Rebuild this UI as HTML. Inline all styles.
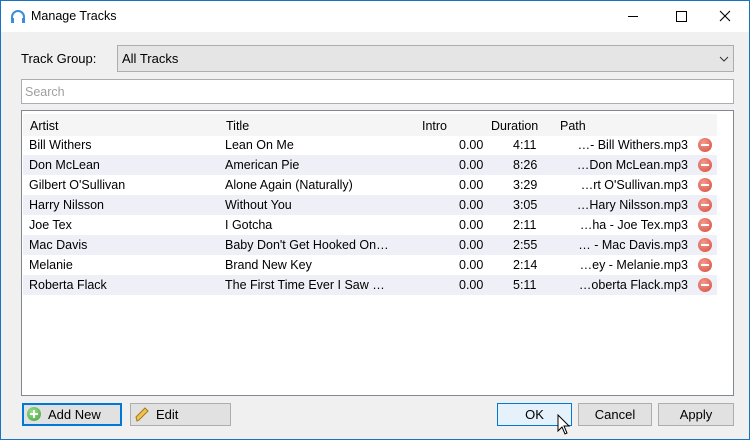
<!DOCTYPE html>
<html><head><style>
body{margin:0;width:750px;height:440px;overflow:hidden;font-family:"Liberation Sans",sans-serif;font-size:12.5px;color:#000}
.win{position:absolute;left:0;top:0;width:748px;height:438px;border:1px solid #1a73c0;background:#f0f0f0}
.tb{position:absolute;left:0;top:0;width:748px;height:31px;background:#fff}
.a{position:absolute;white-space:nowrap}
.box{position:absolute;box-sizing:border-box}
.btn{position:absolute;box-sizing:border-box;background:#e1e1e1;border:1px solid #adadad;height:23px;top:402px;text-align:center;line-height:21px;font-size:13px}
.row{position:absolute;left:1px;width:694px;height:20px}
.row span{position:absolute;top:3px;white-space:nowrap}
.del{position:absolute;left:675px;top:3px;width:14px;height:14px;border-radius:50%;background:radial-gradient(circle at 40% 35%,#f39a8e,#d84b3c);}
.del:after{content:"";position:absolute;left:3px;top:6px;width:8px;height:2px;background:#fff}
</style></head><body>
<div class="win">
<div class="tb">
<svg class="a" style="left:9px;top:8px" width="16" height="16" viewBox="0 0 16 16"><path d="M2 11 V8 A6 6 0 0 1 14 8 V11" fill="none" stroke="#3a8fd8" stroke-width="2"/><rect x="1" y="9" width="3" height="5" fill="#3a8fd8"/><rect x="12" y="9" width="3" height="5" fill="#3a8fd8"/></svg>
<div class="a" style="left:30px;top:8px;font-size:12.5px">Manage Tracks</div>
<div class="a" style="left:627px;top:15px;width:10px;height:1px;background:#000"></div>
<div class="a" style="left:675px;top:10px;width:9px;height:9px;border:1px solid #000"></div>
<svg class="a" style="left:718px;top:9px" width="12" height="12"><path d="M1 1 L11 11 M11 1 L1 11" stroke="#000" stroke-width="1.1"/></svg>
</div>
<div class="a" style="left:20px;top:50px;font-size:13px">Track Group:</div>
<div class="box" style="left:116px;top:44px;width:617px;height:27px;background:#e5e5e5;border:1px solid #adadad"><span class="a" style="left:4px;top:5px;font-size:13px">All Tracks</span><svg class="a" style="left:601px;top:9px" width="10" height="8"><path d="M1 2 L5 6 L9 2" fill="none" stroke="#333"/></svg></div>
<div class="box" style="left:20px;top:78px;width:713px;height:25px;background:#fff;border:1px solid #abadb3"><span class="a" style="left:3px;top:5px;color:#a0a0a0;font-size:12.5px">Search</span></div>
<div class="box" style="left:20px;top:109px;width:713px;height:286px;background:#fff;border:1px solid #828790">
<div class="row" style="top:3px;height:22px;background:#f5f5f5"><span style="left:7px;top:5px">Artist</span><span style="left:203px;top:5px">Title</span><span style="left:399px;top:5px">Intro</span><span style="left:468px;top:5px">Duration</span><span style="left:537px;top:5px">Path</span></div>
<div class="row" style="top:24px"><span style="left:6px">Bill Withers</span><span style="left:202px">Lean On Me</span><span style="left:436px">0.00</span><span style="left:490px">4:11</span><span style="right:29px">…- Bill Withers.mp3</span><i class="del"></i></div>
<div class="row" style="top:44px;background:#efeff7"><span style="left:6px">Don McLean</span><span style="left:202px">American Pie</span><span style="left:436px">0.00</span><span style="left:490px">8:26</span><span style="right:29px">…Don McLean.mp3</span><i class="del"></i></div>
<div class="row" style="top:64px"><span style="left:6px">Gilbert O'Sullivan</span><span style="left:202px">Alone Again (Naturally)</span><span style="left:436px">0.00</span><span style="left:490px">3:29</span><span style="right:29px">…rt O'Sullivan.mp3</span><i class="del"></i></div>
<div class="row" style="top:84px;background:#efeff7"><span style="left:6px">Harry Nilsson</span><span style="left:202px">Without You</span><span style="left:436px">0.00</span><span style="left:490px">3:05</span><span style="right:29px">…Hary Nilsson.mp3</span><i class="del"></i></div>
<div class="row" style="top:104px"><span style="left:6px">Joe Tex</span><span style="left:202px">I Gotcha</span><span style="left:436px">0.00</span><span style="left:490px">2:11</span><span style="right:29px">…ha - Joe Tex.mp3</span><i class="del"></i></div>
<div class="row" style="top:124px;background:#efeff7"><span style="left:6px">Mac Davis</span><span style="left:202px">Baby Don't Get Hooked On…</span><span style="left:436px">0.00</span><span style="left:490px">2:55</span><span style="right:29px">… - Mac Davis.mp3</span><i class="del"></i></div>
<div class="row" style="top:144px"><span style="left:6px">Melanie</span><span style="left:202px">Brand New Key</span><span style="left:436px">0.00</span><span style="left:490px">2:14</span><span style="right:29px">…ey - Melanie.mp3</span><i class="del"></i></div>
<div class="row" style="top:164px;background:#efeff7"><span style="left:6px">Roberta Flack</span><span style="left:202px">The First Time Ever I Saw …</span><span style="left:436px">0.00</span><span style="left:490px">5:11</span><span style="right:29px">…oberta Flack.mp3</span><i class="del"></i></div>
</div>
<div class="btn" style="left:21px;width:100px;border:2px solid #0078d7;line-height:19px;text-align:left;padding-left:24px">Add New</div>
<div class="a" style="left:26px;top:406px;width:14px;height:14px;border-radius:50%;background:radial-gradient(circle at 40% 35%,#9de08f,#3fa33a)"></div>
<div class="a" style="left:29px;top:412px;width:8px;height:2px;background:#fff"></div><div class="a" style="left:32px;top:409px;width:2px;height:8px;background:#fff"></div>
<div class="btn" style="left:129px;width:101px;text-align:left;padding-left:25px">Edit</div>
<svg class="a" style="left:133px;top:405px" width="16" height="17"><path d="M3 15 L2 11 L11 2 L14 5 L5 14 Z" fill="#f3c24e" stroke="#a07820"/></svg>
<div class="btn" style="left:496px;width:75px;background:#e5f1fb;border-color:#0078d7">OK</div>
<div class="btn" style="left:577px;width:74px">Cancel</div>
<div class="btn" style="left:657px;width:76px">Apply</div>
<svg class="a" style="left:556px;top:413px" width="14" height="22"><path d="M1 1 L1 17 L5 13 L8 20 L10 19 L7 12 L12 12 Z" fill="#fff" stroke="#000"/></svg>
</div>
</body></html>
